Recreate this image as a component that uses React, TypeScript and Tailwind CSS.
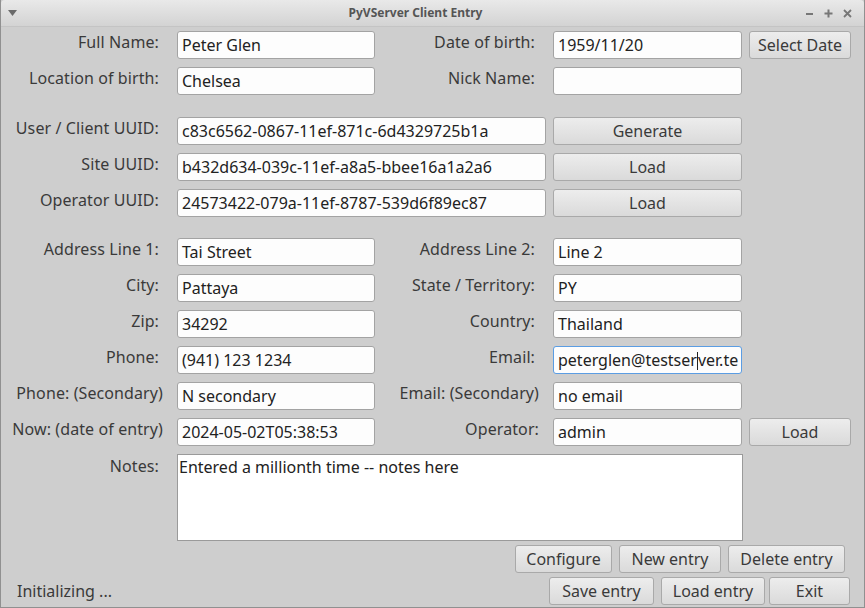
import React from "react"

function Label({ w, children, className = "" }: { w: number; children?: React.ReactNode; className?: string }) {
  return (
    <div className={`shrink-0 text-right leading-[22px] tracking-[0.1px] text-[#3a3a3a] whitespace-nowrap ${className}`} style={{ width: w }}>
      {children}
    </div>
  )
}

function Field({ w, children, focus = false, className = "" }: { w: number; children?: React.ReactNode; focus?: boolean; className?: string }) {
  return (
    <div
      className={`relative shrink-0 h-[28px] rounded-[3px] border bg-[#fdfdfd] pl-[4px] leading-[26px] text-[#222] whitespace-nowrap overflow-hidden ${
        focus ? "border-[#5b9de3]" : "border-[#a3a3a3]"
      } ${className}`}
      style={{ width: w }}
    >
      {children}
    </div>
  )
}

function Btn({ w, children, className = "" }: { w: number; children: React.ReactNode; className?: string }) {
  return (
    <div
      className={`shrink-0 h-[28px] rounded-[3px] border border-[#a9a9a9] bg-gradient-to-b from-[#ededed] to-[#dadada] text-center leading-[26px] text-[#3a3a3a] whitespace-nowrap ${className}`}
      style={{ width: w }}
    >
      {children}
    </div>
  )
}

export default function App() {
  return (
    <div className="w-[865px] h-[608px] flex flex-col bg-[#cecece] border-x border-b border-[#909090] text-[16px] font-['Noto_Sans',sans-serif] overflow-hidden">
      {/* title bar */}
      <div className="h-[27px] shrink-0 flex items-center rounded-t-[4px] bg-gradient-to-b from-[#e9e9e9] to-[#d3d3d3] border-b border-[#c4c4c4] text-[#666]">
        <div className="w-[20px] flex justify-center ml-[1px]">
          <svg width="9" height="6" viewBox="0 0 9 6">
            <path d="M0 0 H9 L4.5 6 Z" fill="#6a6a6a" />
          </svg>
        </div>
        <div className="flex-1 text-center text-[12px] font-bold text-[#555] pl-[4px]">PyVServer Client Entry</div>
        <div className="flex items-center gap-[10px] mr-[12px] text-[#777]">
          <svg width="9" height="9" viewBox="0 0 9 9">
            <path d="M1 5 H8" stroke="#777" strokeWidth="2" />
          </svg>
          <svg width="9" height="9" viewBox="0 0 9 9">
            <path d="M0.5 4.5 H8.5 M4.5 0.5 V8.5" stroke="#777" strokeWidth="2" />
          </svg>
          <svg width="9" height="9" viewBox="0 0 9 9">
            <path d="M1 1 L8 8 M8 1 L1 8" stroke="#777" strokeWidth="1.8" />
          </svg>
        </div>
      </div>

      <div className="flex flex-col pt-[4px]">
        {/* personal */}
        <div className="flex h-[28px]">
          <Label w={158}>Full Name:</Label>
          <Field w={198} className="ml-[18px]">Peter Glen</Field>
          <Label w={160}>Date of birth:</Label>
          <Field w={189} className="ml-[18px]">1959/11/20</Field>
          <Btn w={102} className="ml-[7px]">Select Date</Btn>
        </div>
        <div className="flex h-[28px] mt-[8px]">
          <Label w={158}>Location of birth:</Label>
          <Field w={198} className="ml-[18px]">Chelsea</Field>
          <Label w={160}>Nick Name:</Label>
          <Field w={189} className="ml-[18px]" />
        </div>

        {/* uuids */}
        <div className="flex h-[28px] mt-[22px]">
          <Label w={158}>User / Client UUID:</Label>
          <Field w={369} className="ml-[18px]">c83c6562-0867-11ef-871c-6d4329725b1a</Field>
          <Btn w={189} className="ml-[7px]">Generate</Btn>
        </div>
        <div className="flex h-[28px] mt-[8px]">
          <Label w={158}>Site UUID:</Label>
          <Field w={369} className="ml-[18px]">b432d634-039c-11ef-a8a5-bbee16a1a2a6</Field>
          <Btn w={189} className="ml-[7px]">Load</Btn>
        </div>
        <div className="flex h-[28px] mt-[8px]">
          <Label w={158}>Operator UUID:</Label>
          <Field w={369} className="ml-[18px]">24573422-079a-11ef-8787-539d6f89ec87</Field>
          <Btn w={189} className="ml-[7px]">Load</Btn>
        </div>

        {/* address */}
        <div className="flex h-[28px] mt-[21px]">
          <Label w={158}>Address Line 1:</Label>
          <Field w={198} className="ml-[18px]">Tai Street</Field>
          <Label w={160}>Address Line 2:</Label>
          <Field w={189} className="ml-[18px]">Line 2</Field>
        </div>
        <div className="flex h-[28px] mt-[8px]">
          <Label w={158}>City:</Label>
          <Field w={198} className="ml-[18px]">Pattaya</Field>
          <Label w={160}>State / Territory:</Label>
          <Field w={189} className="ml-[18px]">PY</Field>
        </div>
        <div className="flex h-[28px] mt-[8px]">
          <Label w={158}>Zip:</Label>
          <Field w={198} className="ml-[18px]">34292</Field>
          <Label w={160}>Country:</Label>
          <Field w={189} className="ml-[18px]">Thailand</Field>
        </div>
        <div className="flex h-[28px] mt-[8px]">
          <Label w={158}>Phone:</Label>
          <Field w={198} className="ml-[18px]">(941) 123 1234</Field>
          <Label w={160}>Email:</Label>
          <Field w={189} focus className="ml-[18px]">
            peterglen@testser<span className="inline-block w-px h-[18px] bg-[#222] align-middle -mt-[2px]" />ver.te
          </Field>
        </div>
        <div className="flex h-[28px] mt-[8px]">
          <Label w={162}>Phone: (Secondary)</Label>
          <Field w={198} className="ml-[14px]">N secondary</Field>
          <Label w={164}>Email: (Secondary)</Label>
          <Field w={189} className="ml-[14px]">no email</Field>
        </div>
        <div className="flex h-[28px] mt-[8px]">
          <Label w={162}>Now: (date of entry)</Label>
          <Field w={198} className="ml-[14px]">2024-05-02T05:38:53</Field>
          <Label w={164}>Operator:</Label>
          <Field w={189} className="ml-[14px]">admin</Field>
          <Btn w={102} className="ml-[7px]">Load</Btn>
        </div>

        {/* notes */}
        <div className="flex mt-[8px]">
          <Label w={158} className="pt-[1px]">Notes:</Label>
          <div className="ml-[18px] w-[566px] h-[87px] border border-[#9a9a9a] bg-white pl-px leading-[24px] text-[#222] whitespace-nowrap">
            Entered a millionth time -- notes here
          </div>
        </div>

        {/* actions */}
        <div className="flex h-[28px] mt-[4px] justify-end pr-[19px]">
          <Btn w={97}>Configure</Btn>
          <Btn w={102} className="ml-[7px]">New entry</Btn>
          <Btn w={117} className="ml-[7px]">Delete entry</Btn>
        </div>
        <div className="flex h-[28px] mt-[4px] items-center pr-[14px]">
          <div className="pl-[16px] text-[#3a3a3a] leading-[22px]">Initializing ...</div>
          <div className="flex-1" />
          <Btn w={105}>Save entry</Btn>
          <Btn w={104} className="ml-[7px]">Load entry</Btn>
          <Btn w={81} className="ml-[4px]">Exit</Btn>
        </div>
      </div>
    </div>
  )
}
